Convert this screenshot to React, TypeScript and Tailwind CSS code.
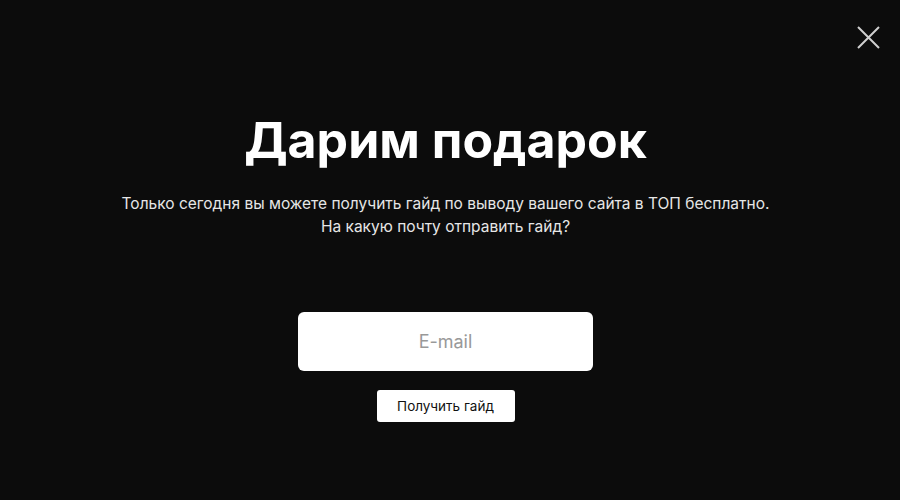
import React from 'react';

export default function App() {
    return (
        <div className="relative h-[500px] w-[900px] overflow-hidden bg-[#0c0c0c] font-['Inter',sans-serif] text-white">
            {/* Close */}
            <button className="absolute right-[20px] top-[26px] h-[23px] w-[23px] text-[#d0d0d0]" aria-label="Close">
                <svg viewBox="0 0 23 23" className="h-full w-full" fill="none" stroke="currentColor" strokeWidth="2">
                    <path d="M1 1L22 22M22 1L1 22" />
                </svg>
            </button>

            <div className="flex flex-col items-center pr-[9px] pt-[108px]">
                <h1 className="text-[50px] font-bold leading-[64px]">Дарим подарок</h1>
                <p className="mt-[20px] text-center text-[15.5px] leading-[23px] text-[#e6e6e6]">
                    Только сегодня вы можете получить гайд по выводу вашего сайта в ТОП бесплатно.
                    <br />
                    На какую почту отправить гайд?
                </p>

                <input
                    type="text"
                    placeholder="E-mail"
                    className="mt-[74px] h-[59px] w-[295px] rounded-[6px] bg-white text-center text-[18px] text-[#333] outline-none placeholder:text-[#999]"
                />
                <button className="mt-[19px] h-[32px] w-[138px] rounded-[3px] bg-white text-[13.5px] text-[#111]">
                    Получить гайд
                </button>
            </div>
        </div>
    );
}
